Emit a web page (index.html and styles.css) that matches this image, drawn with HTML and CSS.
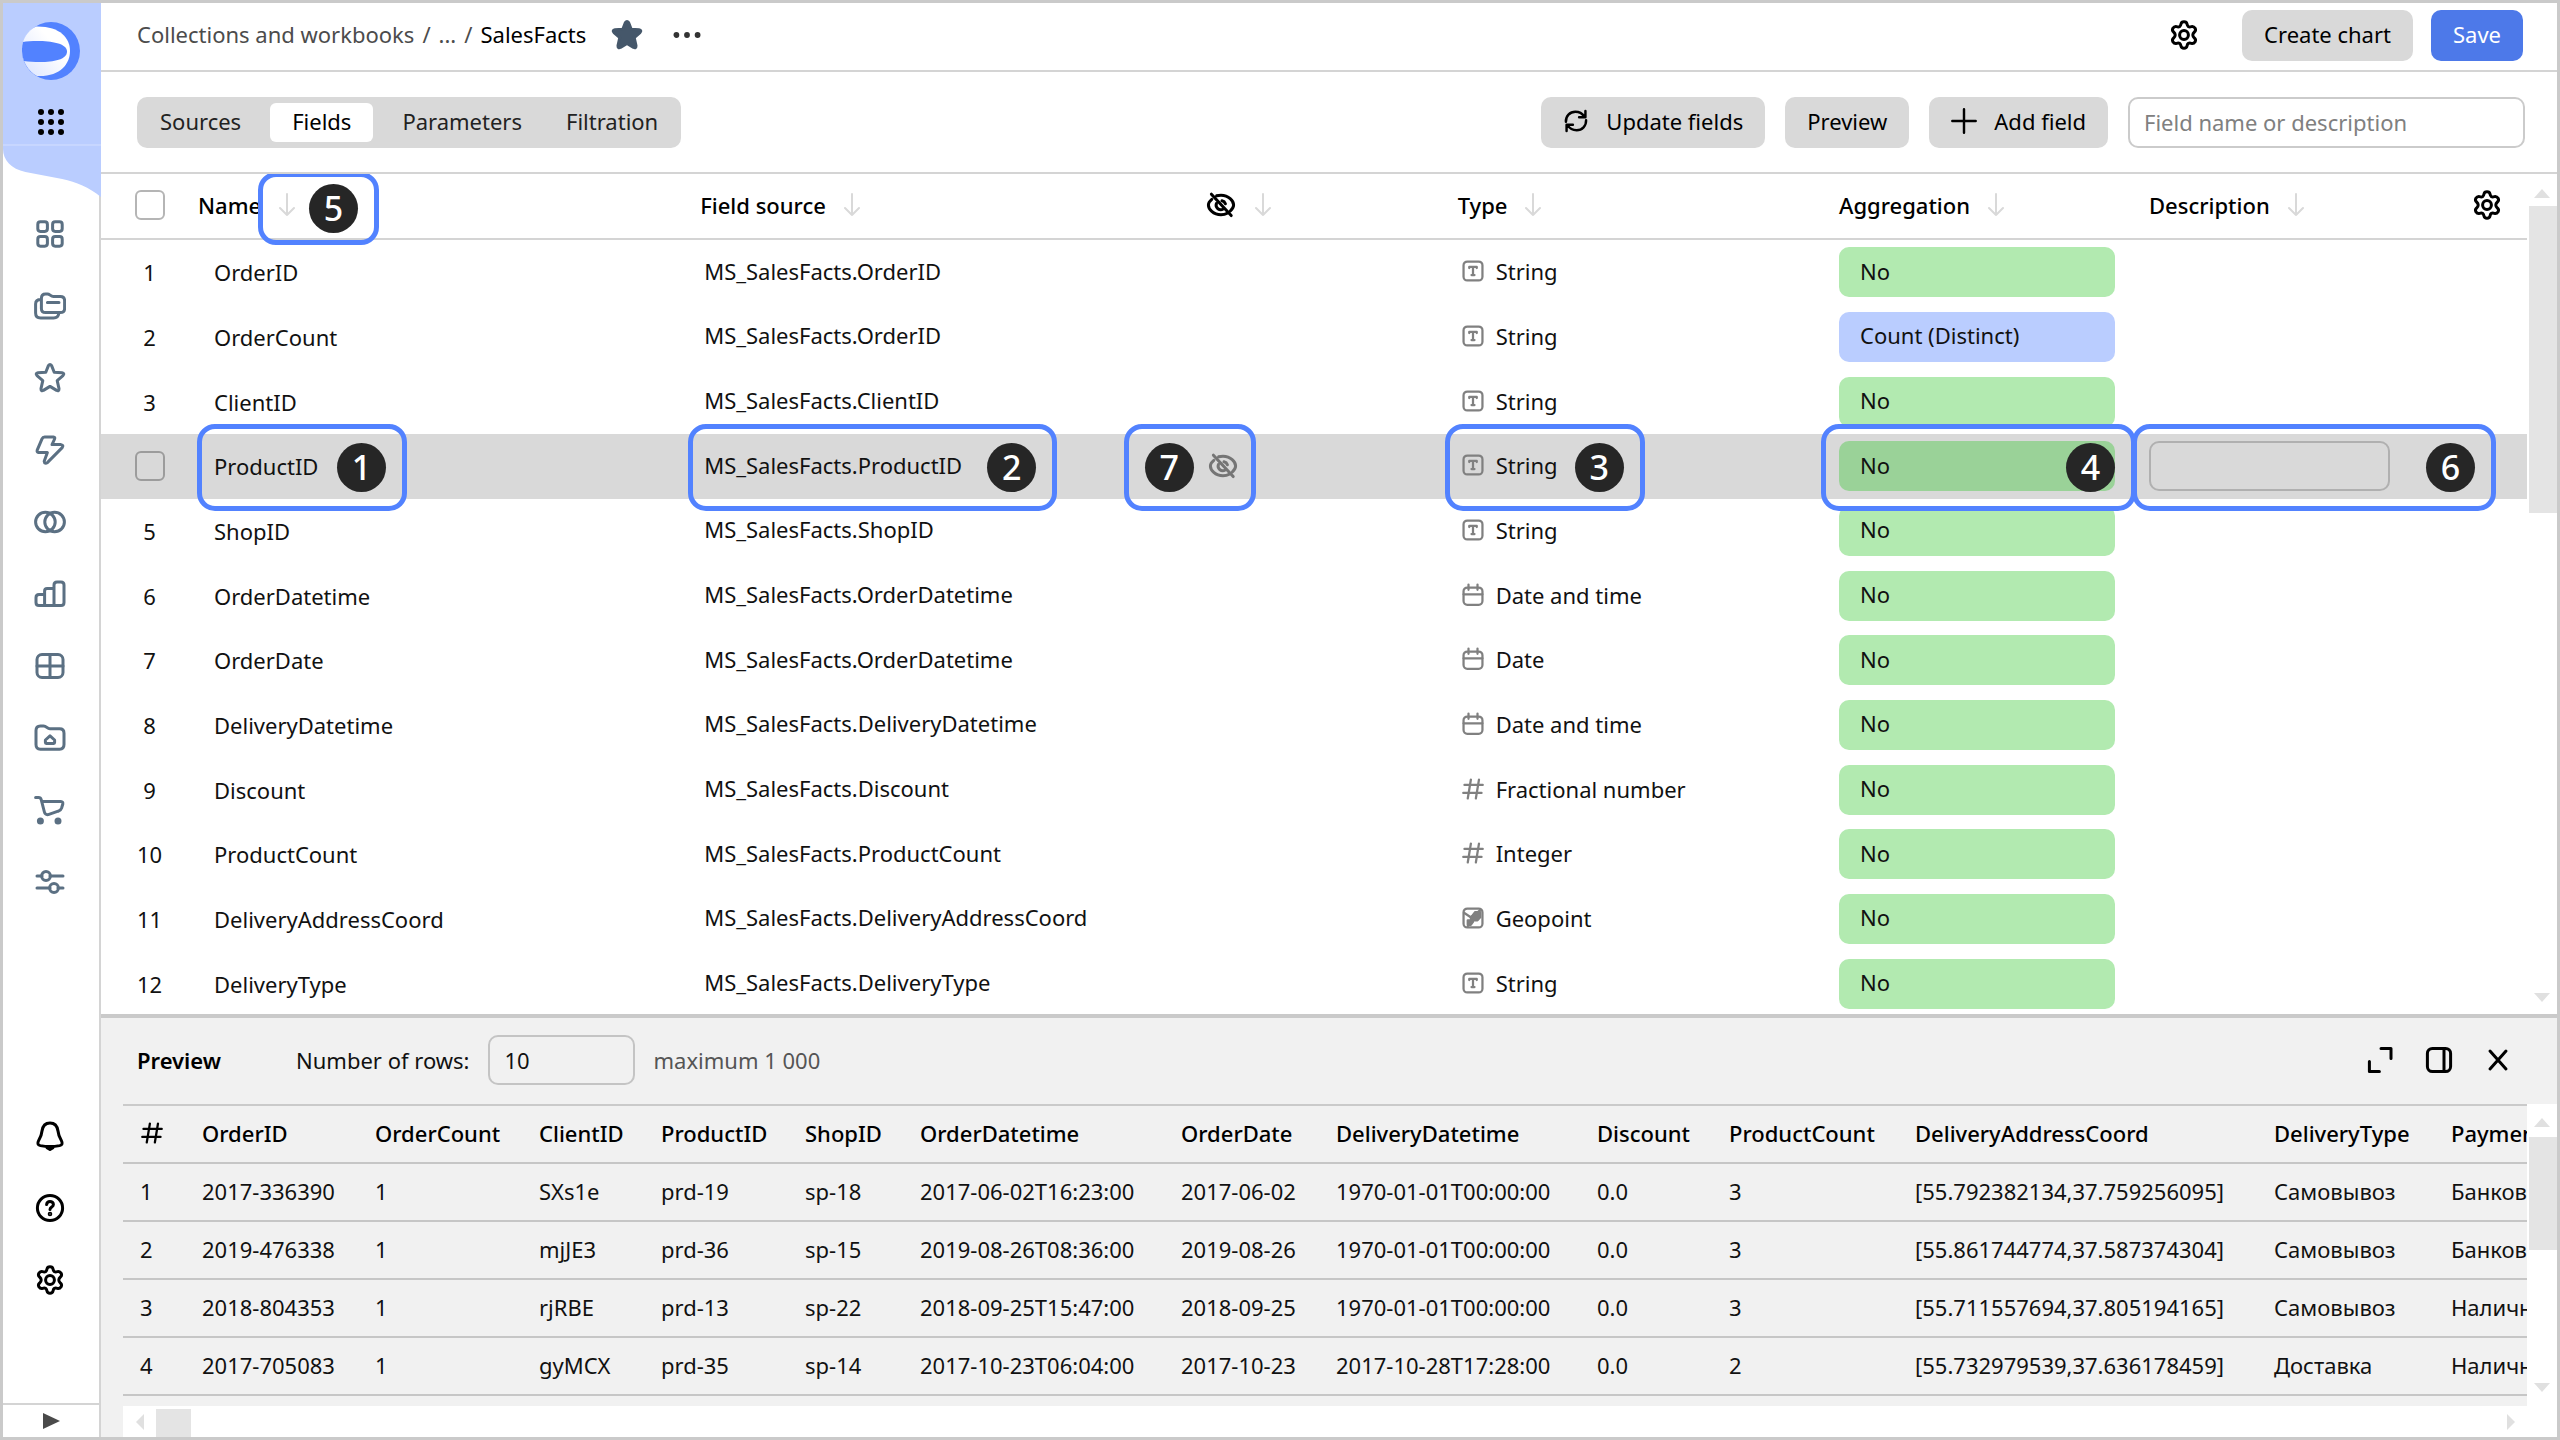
FILE: index.html
```html
<!DOCTYPE html>
<html lang="en">
<head>
  <meta charset="UTF-8" />
  <meta name="viewport" content="width=device-width, initial-scale=1.0"/>
  <title>SalesFacts</title>
  <link rel="stylesheet" href="styles.css">
</head>
<body>

  <svg class="sprite" aria-hidden="true">
    <symbol id="gear" viewBox="0 0 16 16"><path d="M8 1.4Q9.3 1.4 9.5 2.5Q9.7 3.5 10.2 3.8Q10.8 4.1 11.7 3.8Q12.8 3.5 13.6 4.7Q14.1 5.8 13.2 6.5Q12.4 7.2 12.4 8Q12.4 8.8 13.2 9.5Q14.1 10.2 13.6 11.3Q12.8 12.5 11.7 12.2Q10.8 11.9 10.2 12.2Q9.7 12.5 9.5 13.5Q9.3 14.6 8 14.6Q6.7 14.6 6.5 13.5Q6.3 12.5 5.8 12.2Q5.2 11.9 4.3 12.2Q3.2 12.5 2.4 11.3Q1.9 10.2 2.8 9.5Q3.6 8.8 3.6 8Q3.6 7.2 2.8 6.5Q1.9 5.8 2.4 4.7Q3.2 3.5 4.3 3.8Q5.2 4.1 5.8 3.8Q6.3 3.5 6.5 2.5Q6.7 1.4 8 1.4z"/><circle cx="8" cy="8" r="2.2"/></symbol>
    <symbol id="eye-off" viewBox="0 0 16 16"><path d="M5.8 3.400Q6.800 3.100 8 3.100c3.900 0 6.300 2.900 6.300 4.900 0 .9-.6 2-1.600 2.900M3.400 5.200C2.300 6.100 1.700 7.200 1.700 8c0 2 2.400 4.900 6.300 4.900 1.200 0 2.300-.3 3.100-.8M5.700 7.300a2.300 2.300 0 0 0 3.400 2.700M8.500 5.900a2.300 2.300 0 0 1 1.700 1.500M3.200 2.600l9.900 10.700"/></symbol>
    <symbol id="arrow" viewBox="0 0 16 24"><path d="M8 1v21M1 15l7 7 7-7"/></symbol>
    <symbol id="t-string" viewBox="0 0 16 16"><rect x="1.700" y="1.700" width="12.600" height="12.600" rx="2.500"/><path d="M5.500 6V5.300h5V6M8 5.300v5.400M7 10.700h2"/></symbol>
    <symbol id="t-date" viewBox="0 0 16 16"><rect x="1.700" y="3" width="12.600" height="11.500" rx="2.500"/><path d="M1.700 7.500h12.600M5 1v3.500M11 1v3.500"/></symbol>
    <symbol id="t-number" viewBox="0 0 16 16"><path d="M6.600 1.700L4.500 14.300M12 1.700L9.900 14.300M2.300 5.300h12.200M1.500 10.600h12.200"/></symbol>
    <symbol id="t-geo" viewBox="0 0 16 16"><rect x="1.700" y="1.700" width="12.600" height="12.600" rx="2.500"/><path d="M2 4.500l4.500 3L10 5l3-2.500M4.500 13.500l2-4"/><path class="solid" d="M9.500 4h3.300v3.500L11 9.500H8L6.500 8zM4.500 9.500h3l.5 1-1.500 2h-2z"/></symbol>
  </svg>

  <aside class="sidebar">
    <div class="brand">
      <svg class="brand-bg" viewBox="0 0 96 194" preserveAspectRatio="none" aria-hidden="true"><path d="M0 0h96v194C84 184 72 179 58 176L22 169C8 166 0 157 0 146z"/><path class="brand-line" d="M0 142h96"/></svg>
      <a class="logo" href="#" aria-label="DataLens">
        <svg width="58" height="58" viewBox="0 0 58 58">
          <defs><linearGradient id="shade" x1="0" y1="1" x2=".7" y2=".4"><stop offset="0" stop-color="#dbe4ff"/><stop offset="1" stop-color="#fff"/></linearGradient></defs>
          <circle cx="29" cy="29" r="29" fill="#5282ff"/>
          <path d="M14 4.500C38 4 48 16 48 29S38 55 15 54C-5 42-5 14 14 4.500z" fill="url(#shade)"/>
          <path d="M1 20c12-2 44-2 44 9.500S18 41 2 39C-.5 32-.5 26 1 20z" fill="#5282ff"/>
        </svg>
      </a>
      <button class="apps" aria-label="Services">
        <svg width="28" height="28" viewBox="0 0 28 28"><g fill="#000"><circle cx="4" cy="4" r="3"/><circle cx="14" cy="4" r="3"/><circle cx="24" cy="4" r="3"/><circle cx="4" cy="14" r="3"/><circle cx="14" cy="14" r="3"/><circle cx="24" cy="14" r="3"/><circle cx="4" cy="24" r="3"/><circle cx="14" cy="24" r="3"/><circle cx="24" cy="24" r="3"/></g></svg>
      </button>
    </div>
    <nav class="nav">
      <a href="#" aria-label="Dashboards"><svg class="icon" viewBox="0 0 16 16"><rect x="1.900" y="1.900" width="4.800" height="4.800" rx="1.300"/><rect x="9.300" y="1.900" width="4.800" height="4.800" rx="1.300"/><rect x="1.900" y="9.300" width="4.800" height="4.800" rx="1.300"/><rect x="9.300" y="9.300" width="4.800" height="4.800" rx="1.300"/></svg></a>
      <a href="#" aria-label="Collections"><svg class="icon" viewBox="0 0 16 16"><path d="M3.700 4.200C3.700 2.800 4.500 2 5.800 2h.9c1.300 0 1.500 1.200 3 1.200h3.500c1.300 0 2.100.8 2.100 2.100v3.900c0 1.300-.8 2.100-2.100 2.100H5.800c-1.300 0-2.100-.8-2.100-2.100zM3.500 4.800C1.700 4.800.8 5.600.8 7v4.500c0 1.600.9 2.500 2.500 2.500h6.500c1.500 0 2.400-.8 2.600-2.300M6.700 6.200h5.800"/></svg></a>
      <a href="#" aria-label="Favorites"><svg class="icon" viewBox="0 0 16 16"><path d="M7.200 1.800q.8-1.200 1.600 0l1.300 3.300 3.900.3q1.500.3.500 1.400l-2.900 2.500.9 4q.1 1.400-1.200.9L8 12.200l-3.300 2q-1.300.5-1.200-.9l.9-4L1.500 6.800Q.5 5.700 2 5.400l3.900-.3z"/></svg></a>
      <a href="#" aria-label="Connections"><svg class="icon" viewBox="0 0 16 16"><path d="M5.300 1.500h4.400q1 .1.600 1L9 5.300h4.500q1.500.3.600 1.500l-7.300 7.400q-1.500 1-1.700-.6L6.700 9.300H2.300q-1-.2-.7-1.200l2.400-5.700q.4-.9 1.300-.9z"/></svg></a>
      <a href="#" aria-label="Datasets"><svg class="icon" viewBox="0 0 16 16"><circle cx="5.700" cy="8" r="4.900"/><circle cx="10.300" cy="8" r="4.900"/></svg></a>
      <a href="#" aria-label="Charts"><svg class="icon" viewBox="0 0 16 16"><path d="M2.500 8.200h2.800v5.600H2.500q-1.500 0-1.500-1.500V9.700q0-1.500 1.500-1.500zM5.300 13.800V6.500q0-1.300 1.300-1.300H10v8.600zM10 13.800V3.500q0-1.500 1.500-1.500h2q1.500 0 1.500 1.500v8.800q0 1.500-1.500 1.500z"/></svg></a>
      <a href="#" aria-label="Tables"><svg class="icon" viewBox="0 0 16 16"><rect x="1.500" y="2.300" width="13" height="11.400" rx="2.500"/><path d="M8 2.300v11.400M1.500 8h13"/></svg></a>
      <a href="#" aria-label="Workbooks"><svg class="icon" viewBox="0 0 16 16"><path d="M1 4.300Q1 2 3.200 2h1.600c1.500 0 1.700 1.400 3.200 1.400h4.800q2.200 0 2.200 2.200v5.700q0 2.300-2.200 2.300H3.200Q1 13.600 1 11.300zM5.700 9L8 6.900 10.300 9v1.300q0 .4-.4.4H6.100q-.4 0-.4-.4z"/></svg></a>
      <a href="#" aria-label="Marketplace"><svg class="icon" viewBox="0 0 16 16"><path d="M.8 1.800h1.500q1 0 1.300 1L5.200 9q.4 1.500 1.900 1.300l5-1.700q1.300-.4 1.700-1.600l.6-2q.2-1.200-1-1.300H4"/><circle class="solid" cx="3.200" cy="13.500" r="1"/><circle class="solid" cx="12" cy="13.500" r="1"/></svg></a>
      <a href="#" aria-label="Service settings"><svg class="icon" viewBox="0 0 16 16"><path d="M1.500 5H4M8 5h6.500M1.500 11H8M12 11h2.500"/><circle cx="6" cy="5" r="2.200"/><circle cx="10" cy="11" r="2.200"/></svg></a>
    </nav>
    <div class="nav nav-bottom">
      <a href="#" aria-label="Notifications"><svg class="icon" viewBox="0 0 16 16"><path d="M8 1.500c-2.500 0-3.700 1.800-4 4-.2 2-.6 3-1.600 4.600-.8 1.600-.6 2.400.8 2.700q4.800.9 9.600 0c1.400-.3 1.600-1.100.8-2.700C12.600 8.500 12.200 7.500 12 5.500c-.3-2.200-1.500-4-4-4z"/><path class="solid" d="M6.500 13.800h3L8 14.700z"/></svg></a>
      <a href="#" aria-label="Help"><svg class="icon" viewBox="0 0 16 16"><circle cx="8" cy="8" r="6.300"/><path d="M6.300 6.300C6.400 5.200 7.100 4.700 8 4.700s1.700.6 1.700 1.500c0 1.300-1.700 1.300-1.700 2.600"/><circle class="solid" cx="8" cy="11" r=".4"/></svg></a>
      <a href="#" aria-label="Settings"><svg class="icon"><use href="#gear"/></svg></a>
    </div>
    <button class="expand" aria-label="Expand menu"><span class="play"></span></button>
  </aside>

  <main class="page">
    <header class="topbar">
      <div class="crumbs">
        <a href="#">Collections and workbooks</a><span>/</span><a href="#">...</a><span>/</span><strong>SalesFacts</strong>
      </div>
      <button class="icon-btn star" aria-label="Favorite"><svg class="icon" viewBox="0 0 16 16"><path class="solid" d="M7.200 1.800q.8-1.200 1.600 0l1.300 3.300 3.900.3q1.500.3.500 1.400l-2.900 2.500.9 4q.1 1.400-1.200.9L8 12.200l-3.300 2q-1.300.5-1.200-.9l.9-4L1.500 6.800Q.5 5.700 2 5.400l3.900-.3z"/></svg></button>
      <button class="icon-btn more" aria-label="More"><svg class="icon" viewBox="0 0 16 16"><g class="solid"><circle cx="2.700" cy="8" r=".7"/><circle cx="8" cy="8" r=".7"/><circle cx="13.300" cy="8" r=".7"/></g></svg></button>
      <div class="actions">
        <button class="icon-btn" aria-label="Dataset settings"><svg class="icon"><use href="#gear"/></svg></button>
        <button class="btn">Create chart</button>
        <button class="btn btn-primary">Save</button>
      </div>
    </header>

    <div class="toolbar">
      <div class="tabs">
        <button class="tab">Sources</button>
        <button class="tab active">Fields</button>
        <button class="tab">Parameters</button>
        <button class="tab">Filtration</button>
      </div>
      <button class="btn"><svg class="icon-sm" viewBox="0 0 16 16"><path d="M1.800 8.500C1.600 5 4.200 2.300 7.600 2.300c2.300 0 4.300 1.100 5.500 3M14.200 7.500c.2 3.500-2.400 6.200-5.800 6.200-2.300 0-4.300-1.100-5.500-3M13.800 1.800v3.900H9.900M2.200 14.200v-3.900h3.900"/></svg>Update fields</button>
      <button class="btn">Preview</button>
      <button class="btn"><svg class="icon-sm" viewBox="0 0 16 16"><path d="M8 .8v14.400M.8 8h14.400"/></svg>Add field</button>
      <input class="search" type="text" placeholder="Field name or description" aria-label="Field name or description">
    </div>

    <section class="fields">
      <div class="fields-scroll">
        <table class="fields-table">
          <colgroup><col class="c-num"><col class="c-name"><col class="c-source"><col class="c-hide"><col><col class="c-agg"><col class="c-desc"><col class="c-set"></colgroup>
          <thead>
            <tr>
              <th><input type="checkbox" class="check" aria-label="Select all"></th>
              <th><span class="head">Name<svg class="sort"><use href="#arrow"/></svg></span><span class="callout mark-sort"><b class="badge">5</b></span></th>
              <th><span class="head">Field source<svg class="sort"><use href="#arrow"/></svg></span></th>
              <th><span class="head"><svg class="icon"><use href="#eye-off"/></svg><svg class="sort"><use href="#arrow"/></svg></span></th>
              <th><span class="head">Type<svg class="sort"><use href="#arrow"/></svg></span></th>
              <th><span class="head">Aggregation<svg class="sort"><use href="#arrow"/></svg></span></th>
              <th><span class="head">Description<svg class="sort"><use href="#arrow"/></svg></span></th>
              <th><button class="icon-btn" aria-label="Table settings"><svg class="icon"><use href="#gear"/></svg></button></th>
            </tr>
          </thead>
          <tbody>
            <tr><td>1</td><td>OrderID</td><td>MS_SalesFacts.OrderID</td><td></td><td><button class="type"><svg><use href="#t-string"/></svg>String</button></td><td><button class="pill">No</button></td><td></td><td></td></tr>
            <tr><td>2</td><td>OrderCount</td><td>MS_SalesFacts.OrderID</td><td></td><td><button class="type"><svg><use href="#t-string"/></svg>String</button></td><td><button class="pill measure">Count (Distinct)</button></td><td></td><td></td></tr>
            <tr><td>3</td><td>ClientID</td><td>MS_SalesFacts.ClientID</td><td></td><td><button class="type"><svg><use href="#t-string"/></svg>String</button></td><td><button class="pill">No</button></td><td></td><td></td></tr>
            <tr class="hovered">
              <td><input type="checkbox" class="check" aria-label="Select ProductID"></td>
              <td>ProductID<span class="callout mark-name"><b class="badge">1</b></span></td>
              <td>MS_SalesFacts.ProductID<span class="callout mark-source"><b class="badge">2</b></span></td>
              <td><button class="icon-btn eye" aria-label="Hide field"><svg class="icon"><use href="#eye-off"/></svg></button><span class="callout mark-hide"><b class="badge">7</b></span></td>
              <td><button class="type"><svg><use href="#t-string"/></svg>String</button><span class="callout mark-type"><b class="badge">3</b></span></td>
              <td><button class="pill">No</button><span class="callout mark-agg"><b class="badge">4</b></span></td>
              <td><input class="desc" type="text" aria-label="Description"><span class="callout mark-desc"><b class="badge">6</b></span></td>
              <td></td>
            </tr>
            <tr><td>5</td><td>ShopID</td><td>MS_SalesFacts.ShopID</td><td></td><td><button class="type"><svg><use href="#t-string"/></svg>String</button></td><td><button class="pill">No</button></td><td></td><td></td></tr>
            <tr><td>6</td><td>OrderDatetime</td><td>MS_SalesFacts.OrderDatetime</td><td></td><td><button class="type"><svg><use href="#t-date"/></svg>Date and time</button></td><td><button class="pill">No</button></td><td></td><td></td></tr>
            <tr><td>7</td><td>OrderDate</td><td>MS_SalesFacts.OrderDatetime</td><td></td><td><button class="type"><svg><use href="#t-date"/></svg>Date</button></td><td><button class="pill">No</button></td><td></td><td></td></tr>
            <tr><td>8</td><td>DeliveryDatetime</td><td>MS_SalesFacts.DeliveryDatetime</td><td></td><td><button class="type"><svg><use href="#t-date"/></svg>Date and time</button></td><td><button class="pill">No</button></td><td></td><td></td></tr>
            <tr><td>9</td><td>Discount</td><td>MS_SalesFacts.Discount</td><td></td><td><button class="type"><svg><use href="#t-number"/></svg>Fractional number</button></td><td><button class="pill">No</button></td><td></td><td></td></tr>
            <tr><td>10</td><td>ProductCount</td><td>MS_SalesFacts.ProductCount</td><td></td><td><button class="type"><svg><use href="#t-number"/></svg>Integer</button></td><td><button class="pill">No</button></td><td></td><td></td></tr>
            <tr><td>11</td><td>DeliveryAddressCoord</td><td>MS_SalesFacts.DeliveryAddressCoord</td><td></td><td><button class="type"><svg><use href="#t-geo"/></svg>Geopoint</button></td><td><button class="pill">No</button></td><td></td><td></td></tr>
            <tr><td>12</td><td>DeliveryType</td><td>MS_SalesFacts.DeliveryType</td><td></td><td><button class="type"><svg><use href="#t-string"/></svg>String</button></td><td><button class="pill">No</button></td><td></td><td></td></tr>
          </tbody>
        </table>
      </div>
      <div class="scrollbar fields-bar"><i class="up"></i><i class="thumb"></i><i class="down"></i></div>
    </section>

    <section class="preview">
      <div class="preview-head">
        <h2>Preview</h2>
        <label for="rows">Number of rows:</label>
        <input id="rows" class="rows" type="text" value="10">
        <span class="hint">maximum 1 000</span>
        <div class="preview-actions">
          <button class="icon-btn" aria-label="Expand"><svg class="icon" viewBox="0 0 16 16"><path d="M8.500 2.200h5v5M2.700 8.800v5h5"/></svg></button>
          <button class="icon-btn" aria-label="Dock right"><svg class="icon" viewBox="0 0 16 16"><rect x="2.200" y="2.200" width="11.600" height="11.600" rx="2.500"/><path d="M10.500 2.200v11.600"/></svg></button>
          <button class="icon-btn" aria-label="Close"><svg class="icon" viewBox="0 0 16 16"><path d="M4 3.500l8 9M12 3.500l-8 9"/></svg></button>
        </div>
      </div>
      <div class="preview-body">
        <div class="preview-scroll">
          <table class="preview-table">
            <colgroup><col class="p-num"><col class="p-order"><col class="p-count"><col class="p-client"><col class="p-product"><col class="p-shop"><col class="p-datetime"><col class="p-date"><col class="p-datetime"><col class="p-discount"><col class="p-pcount"><col class="p-coord"><col class="p-type"><col class="p-pay"></colgroup>
            <thead>
              <tr><th><svg class="hash" aria-label="#"><use href="#t-number"/></svg></th><th>OrderID</th><th>OrderCount</th><th>ClientID</th><th>ProductID</th><th>ShopID</th><th>OrderDatetime</th><th>OrderDate</th><th>DeliveryDatetime</th><th>Discount</th><th>ProductCount</th><th>DeliveryAddressCoord</th><th>DeliveryType</th><th>Payment</th></tr>
            </thead>
            <tbody>
              <tr><td>1</td><td>2017-336390</td><td>1</td><td>SXs1e</td><td>prd-19</td><td>sp-18</td><td>2017-06-02T16:23:00</td><td>2017-06-02</td><td>1970-01-01T00:00:00</td><td>0.0</td><td>3</td><td>[55.792382134,37.759256095]</td><td>Самовывоз</td><td>Банковс</td></tr>
              <tr><td>2</td><td>2019-476338</td><td>1</td><td>mjJE3</td><td>prd-36</td><td>sp-15</td><td>2019-08-26T08:36:00</td><td>2019-08-26</td><td>1970-01-01T00:00:00</td><td>0.0</td><td>3</td><td>[55.861744774,37.587374304]</td><td>Самовывоз</td><td>Банковс</td></tr>
              <tr><td>3</td><td>2018-804353</td><td>1</td><td>rjRBE</td><td>prd-13</td><td>sp-22</td><td>2018-09-25T15:47:00</td><td>2018-09-25</td><td>1970-01-01T00:00:00</td><td>0.0</td><td>3</td><td>[55.711557694,37.805194165]</td><td>Самовывоз</td><td>Наличн</td></tr>
              <tr><td>4</td><td>2017-705083</td><td>1</td><td>gyMCX</td><td>prd-35</td><td>sp-14</td><td>2017-10-23T06:04:00</td><td>2017-10-23</td><td>2017-10-28T17:28:00</td><td>0.0</td><td>2</td><td>[55.732979539,37.636178459]</td><td>Доставка</td><td>Наличн</td></tr>
            </tbody>
          </table>
        </div>
        <div class="scrollbar preview-bar"><i class="up"></i><i class="thumb"></i><i class="down"></i></div>
      </div>
      <div class="scrollbar-x"><i class="left"></i><i class="thumb"></i><i class="right"></i></div>
    </section>
  </main>

</body>
</html>
```
FILE: styles.css
```css
* {
  box-sizing: border-box;
}

body {
  margin: 0;
  height: 100vh;
  display: flex;
  border: 3px solid #cacaca;
  overflow: hidden;
  background: #fff;
  color: #111;
  font-family: "Noto Sans", sans-serif;
  font-size: 22px;
  line-height: 32px;
}

button,
input {
  font: inherit;
  color: inherit;
}

button {
  border: none;
  background: none;
  padding: 0;
  cursor: pointer;
}

a {
  color: inherit;
  text-decoration: none;
}

svg {
  display: block;
  flex: none;
  fill: none;
  stroke: currentColor;
  stroke-width: 1.5;
  stroke-linecap: round;
  stroke-linejoin: round;
}

.sprite {
  position: absolute;
  width: 0;
  height: 0;
}

.solid {
  fill: currentColor;
}

.icon {
  width: 32px;
  height: 32px;
}

.icon-sm {
  width: 26px;
  height: 26px;
}

/* sidebar */

.sidebar {
  flex: none;
  width: 98px;
  display: flex;
  flex-direction: column;
  border-right: 2px solid #d4d4d4;
}

.brand {
  position: relative;
  height: 194px;
  display: flex;
  flex-direction: column;
  align-items: center;
  gap: 28px;
  padding-top: 19px;
}

.brand-bg {
  position: absolute;
  inset: 0;
  width: 98px;
  height: 100%;
  fill: #bacdff;
  stroke: none;
}

.brand-line {
  stroke: #d3dfff;
  stroke-width: 1;
}

.logo,
.apps {
  position: relative;
}

.logo svg,
.apps svg {
  stroke: none;
}

.nav {
  display: flex;
  flex-direction: column;
  align-items: center;
  gap: 40px;
  padding-top: 21px;
  padding-right: 2px;
  color: #5b7083;
}

.nav-bottom {
  margin-top: auto;
  padding-bottom: 107px;
  color: #000;
}

.expand {
  height: 34px;
  display: flex;
  align-items: center;
  justify-content: center;
  border-top: 2px solid #d4d4d4;
}

.play {
  border-left: 17px solid #4a4a4a;
  border-top: 8px solid transparent;
  border-bottom: 8px solid transparent;
}

/* top */

.page {
  flex: 1;
  min-width: 0;
  display: flex;
  flex-direction: column;
}

.topbar {
  flex: none;
  height: 69px;
  display: flex;
  align-items: center;
  padding: 0 34px 3px 36px;
  border-bottom: 2px solid #d4d4d4;
}

.crumbs {
  display: flex;
  gap: 8px;
  padding-bottom: 2px;
  color: #4c4c4c;
}

.crumbs strong {
  font-weight: 400;
  color: #000;
}

.icon-btn {
  color: #000;
}

.star {
  margin-left: 25px;
  color: #45576a;
}

.more {
  margin-left: 28px;
  color: #333;
}

.actions {
  margin-left: auto;
  display: flex;
  align-items: center;
  gap: 18px;
}

.actions .icon-btn {
  margin-right: 24px;
}

.btn {
  height: 51px;
  display: flex;
  align-items: center;
  gap: 17px;
  padding: 0 22px 3px;
  border-radius: 10px;
  background: #d9d9d9;
  color: #000;
  white-space: nowrap;
}

.btn-primary {
  background: #4d79e9;
  color: #fff;
}

.toolbar {
  flex: none;
  height: 102px;
  display: flex;
  align-items: center;
  gap: 20px;
  padding: 0 32px 0 36px;
  border-bottom: 2px solid #d4d4d4;
}

.tabs {
  height: 51px;
  display: flex;
  margin-right: auto;
  padding: 6px 1px;
  border-radius: 10px;
  background: #d9d9d9;
}

.tab {
  padding: 0 22px 3px;
  border-radius: 6px;
  color: #222;
}

.tab.active {
  margin: 0 7px;
  background: #fff;
  color: #000;
}

.search {
  width: 397px;
  height: 51px;
  padding: 0 14px;
  border: 2px solid #cbcbcb;
  border-radius: 10px;
}

.search::placeholder {
  color: #808080;
}

/* fields */

.fields {
  flex: 1;
  min-height: 0;
  display: flex;
}

.fields-scroll {
  flex: 1;
  overflow: hidden;
}

.fields-table {
  width: 100%;
  height: calc(100% + 2px);
  table-layout: fixed;
  border-collapse: separate;
  border-spacing: 0;
}

.c-num { width: 97px; }
.c-name { width: 20%; }
.c-source { width: 21%; }
.c-hide { width: 246px; }
.c-agg { width: 293px; }
.c-desc { width: 258px; }
.c-set { width: 137px; }

.fields-table th {
  position: relative;
  height: 66px;
  padding: 0 17px 3px;
  border-bottom: 2px solid #d4d4d4;
  font-weight: 500;
  color: #000;
  text-align: left;
}

.fields-table td {
  position: relative;
  padding: 0;
  white-space: nowrap;
}

.fields-table th:nth-child(1),
.fields-table td:nth-child(1) {
  padding-left: 0;
  padding-right: 0;
  text-align: center;
}

.fields-table th:nth-child(2),
.fields-table th:nth-child(6) {
  padding-left: 0;
}

.fields-table td:nth-child(2) {
  padding-left: 16px;
}

.fields-table td:nth-child(3) {
  padding-left: 21px;
  padding-bottom: 3px;
}

.fields-table th:nth-child(4) {
  padding-left: 12px;
}

.fields-table th:nth-child(5) {
  padding-left: 19px;
}

.fields-table td:nth-child(5) {
  padding-left: 22px;
  padding-bottom: 2px;
}

.fields-table td:nth-child(7) {
  padding-left: 17px;
}

.fields-table th:nth-child(8) .icon-btn {
  display: block;
  margin-left: auto;
  margin-right: 7px;
}

.head {
  display: flex;
  align-items: center;
  gap: 18px;
}

.head .sort {
  width: 16px;
  height: 24px;
  color: #d9d9d9;
  stroke-width: 2;
}

.check {
  appearance: none;
  display: block;
  width: 30px;
  height: 30px;
  margin: 0 auto;
  border: 2px solid #b5b5b5;
  border-radius: 6px;
}

.hovered {
  background: #d9d9d9;
}

.hovered .check {
  border-color: #9c9c9c;
}

.type {
  display: flex;
  align-items: center;
  gap: 11px;
}

.type svg {
  width: 24px;
  height: 24px;
  color: #808080;
}

.pill {
  display: block;
  width: 276px;
  height: 50px;
  padding: 0 21px 3px;
  border-radius: 10px;
  background: #b2eab0;
  text-align: left;
}

.measure {
  background: #bacdff;
}

.hovered .pill {
  background: #9ad298;
}

.eye {
  display: block;
  margin-left: 14px;
  color: #757575;
}

.desc {
  display: block;
  width: 100%;
  height: 50px;
  border: 2px solid #b0b0b0;
  border-radius: 10px;
  background: transparent;
}

/* numbered marks over the table */

.callout {
  position: absolute;
  z-index: 1;
  top: -10px;
  bottom: -12px;
  display: flex;
  align-items: center;
  justify-content: flex-end;
  padding-right: 16px;
  border: 5px solid #5282ff;
  border-radius: 18px;
  pointer-events: none;
}

.badge {
  width: 49px;
  height: 49px;
  border-radius: 50%;
  background: #262626;
  color: #fff;
  font-size: 34px;
  font-weight: 500;
  line-height: 48px;
  text-align: center;
}

.mark-sort { left: 60px; width: 121px; top: -2px; bottom: -7px; }
.mark-name { left: -1px; width: 210px; }
.mark-source { left: 5px; width: 369px; }
.mark-hide { left: -69px; width: 132px; justify-content: flex-start; padding-left: 16px; }
.mark-type { left: 6px; width: 200px; }
.mark-agg { left: -18px; width: 315px; }
.mark-desc { left: 0; width: 364px; }

/* scrollbars */

.scrollbar {
  flex: none;
  width: 30px;
  display: flex;
  flex-direction: column;
  align-items: center;
  background: #fff;
}

.scrollbar .thumb {
  width: 28px;
  margin: 8px 0 0 2px;
  background: #e4e4e4;
}

.up,
.down {
  border-left: 8px solid transparent;
  border-right: 8px solid transparent;
}

.up {
  border-bottom: 9px solid #e0e0e0;
}

.down {
  margin-top: auto;
  border-top: 9px solid #e0e0e0;
}

.fields-bar {
  padding: 15px 0 12px;
}

.fields-bar .thumb {
  height: 307px;
}

/* preview */

.preview {
  flex: none;
  border-top: 4px solid #cacaca;
  background: #f1f1f1;
}

.preview-head {
  height: 86px;
  display: flex;
  align-items: center;
  padding: 0 43px 2px 36px;
}

.preview-head h2 {
  margin: 0 75px 0 0;
  font-size: 22px;
  font-weight: 600;
  color: #000;
}

.rows {
  width: 147px;
  height: 50px;
  margin: 0 19px 0 18px;
  padding: 0 15px;
  border: 2px solid #c4c4c4;
  border-radius: 10px;
  background: transparent;
}

.hint {
  color: #555;
}

.preview-actions {
  margin-left: auto;
  display: flex;
  gap: 27px;
}

.preview-body {
  height: 302px;
  display: flex;
  padding-left: 22px;
}

.preview-scroll {
  flex: 1;
  overflow: hidden;
}

.preview-table {
  width: 2500px;
  table-layout: fixed;
  border-collapse: separate;
  border-spacing: 0;
  border-top: 2px solid #cacaca;
}

.preview-table th,
.preview-table td {
  height: 58px;
  padding: 0 0 2px 19px;
  border-bottom: 2px solid #c6c6c6;
  text-align: left;
  white-space: nowrap;
}

.preview-table th {
  font-weight: 500;
  color: #000;
}

.preview-table th:first-child,
.preview-table td:first-child {
  padding-left: 17px;
}

.hash {
  width: 24px;
  height: 24px;
}

.p-num { width: 60px; }
.p-order { width: 173px; }
.p-count { width: 164px; }
.p-client { width: 122px; }
.p-product { width: 144px; }
.p-shop { width: 115px; }
.p-datetime { width: 261px; }
.p-date { width: 155px; }
.p-discount { width: 132px; }
.p-pcount { width: 186px; }
.p-coord { width: 359px; }
.p-type { width: 177px; }

.preview-bar {
  padding: 14px 0;
}

.preview-bar .thumb {
  height: 113px;
  margin-top: 10px;
}

.scrollbar-x {
  height: 31px;
  display: flex;
  align-items: center;
  margin-left: 22px;
  padding: 0 42px 0 13px;
  background: #fff;
}

.scrollbar-x .thumb {
  width: 35px;
  height: 28px;
  margin: 3px 0 0 12px;
  background: #e4e4e4;
}

.left,
.right {
  border-top: 8px solid transparent;
  border-bottom: 8px solid transparent;
}

.left {
  border-right: 8px solid #e0e0e0;
}

.right {
  margin-left: auto;
  border-left: 8px solid #e0e0e0;
}
```
